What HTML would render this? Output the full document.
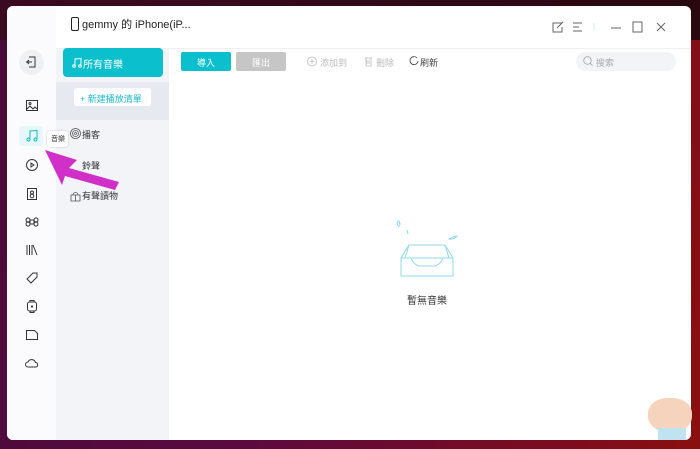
<!DOCTYPE html>
<html><head><meta charset="utf-8"><style>
*{margin:0;padding:0;box-sizing:border-box}
body{width:700px;height:449px;overflow:hidden;position:relative;font-family:"Liberation Sans","Noto Sans CJK TC",sans-serif;background:linear-gradient(100deg,#4a0a3a 0%,#5a0a40 40%,#7a0c20 80%,#8a1010 100%)}
.bgtop{position:absolute;left:0;top:0;width:700px;height:40px;background:linear-gradient(90deg,#3a0a20,#2a0810)}
.win{position:absolute;left:7px;top:6px;width:684px;height:434px;background:#fff;border-radius:6px;overflow:hidden}
.rail{position:absolute;left:0;top:0;width:49px;height:434px;background:#fbfbfd}
.sub{position:absolute;left:49px;top:42px;width:113px;height:392px;background:#f3f4f8}
.hdr{position:absolute;left:49px;top:42px;width:635px;height:1px;background:#f0f0f3}
.abs{position:absolute}
.t{position:absolute;font-size:9px;color:#333;white-space:nowrap}
svg{position:absolute;overflow:visible}
</style></head><body>
<div class="bgtop"></div>
<div class="win">
<div class="rail"></div>
<div class="sub"></div>
<div class="hdr"></div>
<!-- title -->
<svg style="left:64px;top:11px" width="8" height="14"><rect x="0.5" y="0.5" width="7" height="13" rx="1.5" fill="none" stroke="#222" stroke-width="1"/></svg>
<div class="t" style="left:75px;top:10px;font-size:11px;color:#222">gemmy 的 iPhone(iP...</div>
<!-- window controls -->
<svg style="left:545px;top:14px" width="130" height="14" stroke="#666" fill="none" stroke-width="1">
<path d="M10 3H1v9h9V7M5 8l6-6"/>
<path d="M21 3h9M21 7h6M21 11h9"/>
<path d="M42 3v7" stroke="#cfe8f0"/>
<path d="M59 8h10"/>
<rect x="81" y="2" width="9" height="10"/>
<path d="M105 3l8 8M113 3l-8 8"/>
</svg>
<!-- back button -->
<div class="abs" style="left:12px;top:44px;width:25px;height:25px;border-radius:50%;background:#eff0f3"></div>
<svg style="left:18px;top:50px" width="12" height="12" stroke="#333" fill="none" stroke-width="1"><path d="M4 1h6v10H4M1 6h6M4 4l-2 2 2 2"/></svg>
<!-- rail icons -->
<svg style="left:19px;top:94px" width="12" height="12" stroke="#333" fill="none" stroke-width="1"><rect x="0.5" y="0.5" width="11" height="10"/><path d="M1 9l3-3 3 3 2-2 2 2"/><circle cx="4" cy="3.5" r="1"/></svg>
<div class="abs" style="left:12px;top:120px;width:24px;height:20px;border-radius:4px;background:#e6f7f9"></div>
<svg style="left:19px;top:124px" width="12" height="12" stroke="#1bb8c8" fill="none" stroke-width="1"><path d="M4 9V1l7-0.5V9"/><circle cx="2.5" cy="9.5" r="1.5"/><circle cx="9.5" cy="9.5" r="1.5"/></svg>
<svg style="left:19px;top:153px" width="12" height="12" stroke="#333" fill="none" stroke-width="1"><circle cx="6" cy="6" r="5.5"/><path d="M5 4v4l3-2z"/></svg>
<svg style="left:19px;top:182px" width="12" height="12" stroke="#333" fill="none" stroke-width="1"><rect x="1.5" y="0.5" width="9" height="11"/><circle cx="6" cy="4.5" r="1.5"/><circle cx="6" cy="8" r="1.8"/></svg>
<svg style="left:19px;top:210px" width="12" height="12" stroke="#333" fill="none" stroke-width="1"><path d="M4 4h4v4H4zM4 4a2 2 0 1 1 0-.1M8 4a2 2 0 1 0 0-.1M4 8a2 2 0 1 0 0 .1M8 8a2 2 0 1 1 0 .1"/></svg>
<svg style="left:19px;top:238px" width="12" height="12" stroke="#333" fill="none" stroke-width="1"><path d="M1 1v10M3.5 1v10M6 1v10M7 1l4 10"/></svg>
<svg style="left:19px;top:266px" width="12" height="12" stroke="#333" fill="none" stroke-width="1"><path d="M7 1h4v4l-6 6-4-4z"/></svg>
<svg style="left:20px;top:294px" width="10" height="13" stroke="#333" fill="none" stroke-width="1"><rect x="0.5" y="2" width="9" height="9" rx="2"/><path d="M3 2V0.5h4V2M3 11v1.5h4V11"/><circle cx="5" cy="6.5" r="0.6"/></svg>
<svg style="left:19px;top:323px" width="12" height="12" stroke="#333" fill="none" stroke-width="1"><path d="M0.5 1.5h8l3 3v6h-11z"/></svg>
<svg style="left:18px;top:352px" width="14" height="10" stroke="#333" fill="none" stroke-width="1"><path d="M3 9a2.5 2.5 0 0 1 0-5 4 4 0 0 1 7.5 0.5A2.3 2.3 0 0 1 11 9z"/></svg>
<!-- tooltip -->
<div class="abs" style="left:40px;top:125px;width:21px;height:16px;background:#fff;border-radius:3px;box-shadow:0 0 2px rgba(0,0,0,.2)"></div>
<div class="t" style="left:44px;top:128px;font-size:7px;color:#333">音樂</div>
<!-- all music -->
<div class="abs" style="left:56px;top:42px;width:100px;height:29px;background:#0bbfcc;border-radius:4px"></div>
<svg style="left:65px;top:52px" width="10" height="10" stroke="#fff" fill="none" stroke-width="1"><path d="M3 8V1l6-0.5V8"/><circle cx="2" cy="8" r="1.3"/><circle cx="8" cy="8" r="1.3"/></svg>
<div class="t" style="left:76px;top:50px;color:#fff;font-size:10px">所有音樂</div>
<div class="abs" style="left:49px;top:76px;width:113px;height:38px;background:#e6e9ef"></div>
<div class="abs" style="left:67px;top:82px;width:77px;height:18px;background:#fff;border-radius:3px"></div>
<div class="t" style="left:73px;top:86px;color:#1bb8c8;font-size:9px">+ 新建播放清單</div>
<svg style="left:63px;top:122px" width="11" height="11" stroke="#555" fill="none" stroke-width="0.8"><circle cx="5.5" cy="5.5" r="5"/><circle cx="5.5" cy="5.5" r="3"/><circle cx="5.5" cy="5.5" r="1"/></svg>
<div class="t" style="left:75px;top:122px">播客</div>
<div class="t" style="left:75px;top:153px">鈴聲</div>
<svg style="left:63px;top:184px" width="11" height="12" stroke="#555" fill="none" stroke-width="0.8"><path d="M1 5h9v6H1zM5.5 5v6M3 5a2.5 2.5 0 0 1 5 0"/></svg>
<div class="t" style="left:75px;top:183px">有聲讀物</div>
<!-- arrow -->
<svg style="left:0;top:0" width="120" height="200"><path d="M38 144 L70 154 L62 162 L112 176 L108 184 L58 170 L55 179 Z" fill="#d030c8"/></svg>
<!-- toolbar -->
<div class="abs" style="left:174px;top:46px;width:50px;height:19px;background:#0bbfcc;border-radius:2px"></div>
<div class="t" style="left:190px;top:50px;color:#fff">導入</div>
<div class="abs" style="left:229px;top:46px;width:50px;height:19px;background:#c6c6c6;border-radius:2px"></div>
<div class="t" style="left:245px;top:50px;color:#fff">匯出</div>
<svg style="left:300px;top:50px" width="120" height="11" stroke="#bbb" fill="none" stroke-width="0.8"><circle cx="5" cy="5.5" r="4.5"/><path d="M5 3v5M2.5 5.5h5"/><path d="M58 2h7M59 2v8h5V2M60 4v4M62 4v4"/><path d="M110 2a4 4 0 1 0 1 3" stroke="#444"/></svg>
<div class="t" style="left:313px;top:50px;color:#bbb">添加到</div>
<div class="t" style="left:369px;top:50px;color:#bbb">刪除</div>
<div class="t" style="left:413px;top:50px;color:#444">刷新</div>
<div class="abs" style="left:569px;top:46px;width:100px;height:19px;background:#f3f4f8;border-radius:10px"></div>
<svg style="left:576px;top:50px" width="10" height="10" stroke="#aaa" fill="none" stroke-width="0.9"><circle cx="4.5" cy="4.5" r="3.8"/><path d="M7.3 7.3L9.5 9.5"/></svg>
<div class="t" style="left:589px;top:50px;color:#aaa">搜索</div>
<!-- empty -->
<svg style="left:390px;top:210px" width="60" height="60" stroke="#8fdbe5" fill="none" stroke-width="1"><path d="M0 7q2 -5 3 1 -1 5 -3 -1z"/><path d="M10 14l1 4"/><path d="M52 23q5 -3 8 -3 -4 4 -8 3z"/><path d="M12 29h36l4 13H8z"/><path d="M4 42h52v18H4zM4 42l8-13M56 42l-8-13M14 42q2 6 8 8h16q6-2 8-8"/></svg>
<div class="t" style="left:400px;top:286px;font-size:10px;color:#333">暫無音樂</div>
</div>
<!-- mascot -->
<div class="abs" style="left:648px;top:398px;width:44px;height:34px;border-radius:45%;background:#f5d3bd"></div>
<div class="abs" style="left:658px;top:428px;width:28px;height:12px;background:#bfe3f1"></div>
</body></html>
